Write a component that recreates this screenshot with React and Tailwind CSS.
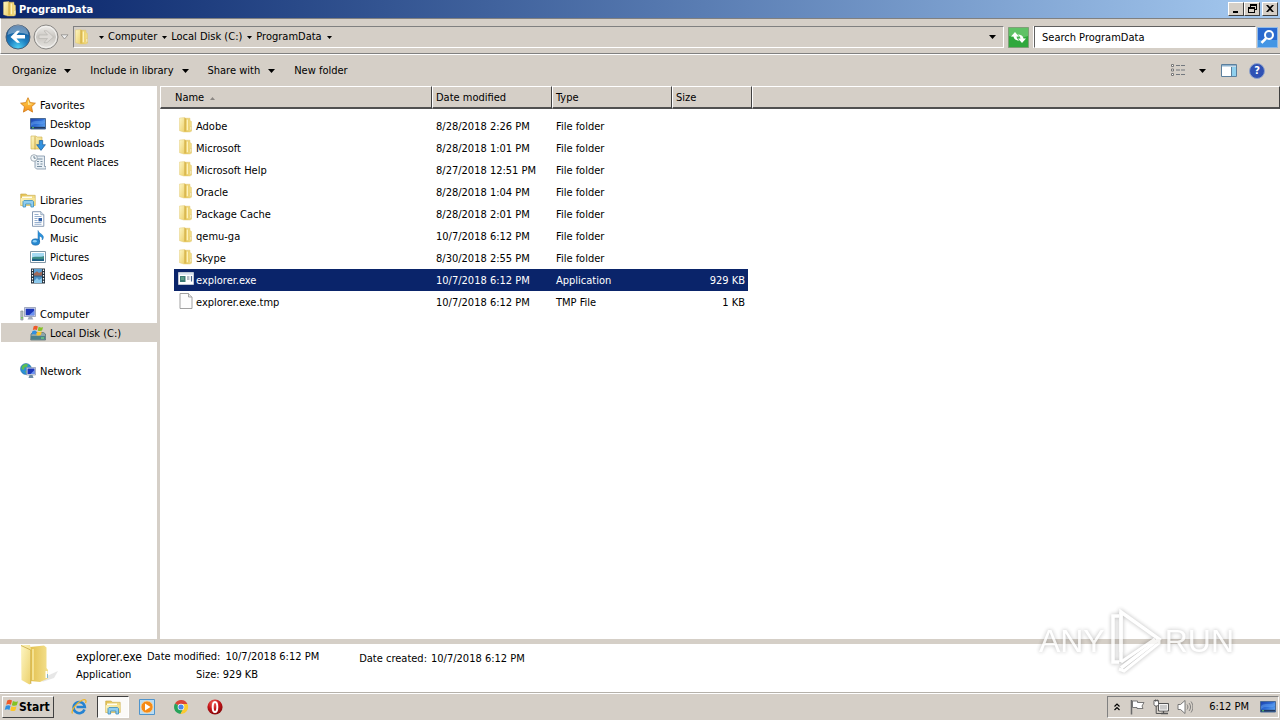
import React, { useState } from 'react';

const Svg = ({ size = 16, box = 16, className = '', children }) => (
  <svg width={size} height={size} viewBox={`0 0 ${box} ${box}`} className={`shrink-0 ${className}`} aria-hidden="true">
    {children}
  </svg>
);

const Gradients = () => (
  <svg width="0" height="0" className="absolute" aria-hidden="true">
    <defs>
      <linearGradient id="folderFront" x1="0" y1="0" x2="1" y2="1">
        <stop offset="0" stopColor="#fdf6c4" />
        <stop offset="1" stopColor="#ecd06a" />
      </linearGradient>
      <linearGradient id="folderBack" x1="0" y1="0" x2="1" y2="0">
        <stop offset="0" stopColor="#e3c04f" />
        <stop offset="1" stopColor="#f3e08d" />
      </linearGradient>
      <linearGradient id="screen" x1="0" y1="0" x2="1" y2="1">
        <stop offset="0" stopColor="#1c3fa8" />
        <stop offset="0.5" stopColor="#2f6fd8" />
        <stop offset="1" stopColor="#6db4f5" />
      </linearGradient>
      <radialGradient id="backBtn" cx="0.5" cy="0.95" r="0.9">
        <stop offset="0" stopColor="#4fd0f5" />
        <stop offset="0.45" stopColor="#1d7fc0" />
        <stop offset="1" stopColor="#14508f" />
      </radialGradient>
      <linearGradient id="fwdBtn" x1="0" y1="0" x2="0" y2="1">
        <stop offset="0" stopColor="#f1efec" />
        <stop offset="0.5" stopColor="#c9c6c1" />
        <stop offset="1" stopColor="#e9e7e3" />
      </linearGradient>
      <linearGradient id="star" x1="0" y1="0" x2="0" y2="1">
        <stop offset="0" stopColor="#ffd84e" />
        <stop offset="1" stopColor="#f58f1c" />
      </linearGradient>
      <radialGradient id="operaRed" cx="0.4" cy="0.25" r="0.8">
        <stop offset="0" stopColor="#f2685c" />
        <stop offset="0.5" stopColor="#c41418" />
        <stop offset="1" stopColor="#7d0508" />
      </radialGradient>
    </defs>
  </svg>
);

const FolderIcon = ({ size = 16 }) => (
  <Svg size={size}>
    <path d="M6 1.2h6v2.3l1.5 1v9.7L12 15H6z" fill="url(#folderBack)" stroke="#dcc064" strokeWidth=".4" />
    <path d="M1.500 1 6.800.5v13.700l-1 .8-4.300-1.300z" fill="url(#folderFront)" stroke="#e0c66a" strokeWidth=".4" />
    <path d="M7 1v13" stroke="#c39a31" strokeWidth=".6" />
    <path d="M9.300 2.500v10.800" stroke="#fff6c4" strokeWidth="1.200" />
    <path d="M12.200 9.500h1.300v3.600h-1.300z" fill="#fffbe2" stroke="#cfae4b" strokeWidth=".3" />
  </Svg>
);

const BigFolderIcon = () => (
  <svg width="40" height="42" viewBox="0 0 40 42" className="shrink-0" aria-hidden="true">
    <path d="M27 32 38 27l-4 7-12 4z" fill="#cfcfcf" opacity=".5" />
    <path d="M10 3 24 1.500l2.500 2V24l1.500 2v8.500L20 38l-10-1z" fill="url(#folderBack)" />
    <path d="M1 1h9l1 4v34l-1.500 1.500L1.500 36z" fill="url(#folderFront)" />
    <path d="M1 1.500 10.800 6v34" fill="none" stroke="#c9a73f" strokeWidth=".8" />
    <path d="M13 5v31" stroke="#f8e9a0" strokeWidth="1.600" />
    <path d="M25.500 27h2v7h-2z" fill="#fff" />
    <path d="M27.500 30v4" stroke="#64a8cd" strokeWidth=".8" />
  </svg>
);

const StarIcon = () => (
  <Svg>
    <path d="m8 .7 2.200 4.900 5.200.6-3.900 3.500 1.100 5.400L8 12.400l-4.600 2.700 1.100-5.400L.6 6.200l5.200-.6z" fill="url(#star)" stroke="#d07a16" strokeWidth=".8" />
    <path d="m8 2.800 1.500 3.600 3.400.5L8 8z" fill="#fff4b8" opacity=".8" />
  </Svg>
);

const DesktopIcon = () => (
  <Svg>
    <path d="M.5 2.500h15V13H.5z" fill="url(#screen)" stroke="#4a6a94" />
    <path d="M1 10.800h14v1.800H1z" fill="#22385e" />
    <path d="M2 11.200h2v1H2z" fill="#5ad06a" />
    <path d="M1 7c4-4 9 0 14-4v4c-5 3-9-1-14 3z" fill="#7fc0ff" opacity=".35" />
  </Svg>
);

const DownloadsIcon = () => (
  <Svg>
    <path d="M1 1h5l1 1h5v12H1z" fill="url(#folderFront)" stroke="#cfae4b" strokeWidth=".6" />
    <path d="M5 1.500v13" stroke="#b8912f" strokeWidth=".7" />
    <path d="M9.300 5.500h3.400v4.200h2.700L11 15.400 6.600 9.700h2.700z" fill="#3292e0" stroke="#175a9c" strokeWidth=".7" />
  </Svg>
);

const RecentIcon = () => (
  <Svg>
    <path d="M5 2h9.500v10.500H16V15H6.500L5 13.500z" fill="#e7eef4" stroke="#7c91a4" strokeWidth=".8" />
    <path d="M7 5h5.500M7 7.500h2M10.500 7.500h2M7 10h2M10.500 10h2M7 12.500h5" stroke="#6a8296" strokeWidth=".9" />
    <circle cx="4" cy="4" r="3.300" fill="#f6fafc" stroke="#8d9ba6" strokeWidth=".8" />
    <path d="M4 2v2.200h1.800" fill="none" stroke="#4d6678" strokeWidth=".8" />
  </Svg>
);

const LibrariesIcon = () => (
  <Svg>
    <path d="M.7 2h5.500l1.200 1.300h7.800v10.200H.7z" fill="url(#folderBack)" stroke="#c6a648" strokeWidth=".6" />
    <path d="M2 4.500h10V6H2z" fill="#fffdf0" />
    <path d="M.7 6.200h14.600v7.100H.7z" fill="url(#folderFront)" />
    <path d="M3 15V9.500l1-1h8.500l1 1V15h-2.600v-3H5.600v3z" fill="#8fcdf0" stroke="#3a8dbd" strokeWidth=".8" />
  </Svg>
);

const DocumentsIcon = () => (
  <Svg>
    <path d="M2.500.7h8.300l3 3v11.600H2.500z" fill="#fff" stroke="#7b90ab" strokeWidth=".9" />
    <path d="M10.800.7v3h3" fill="#dce6f2" stroke="#7b90ab" strokeWidth=".7" />
    <path d="M4.500 3.500h4M4.500 5.500h7M4.500 7.500h3M4.500 9.500h3M4.500 11.500h7M4.500 13.300h7" stroke="#7b9bc2" strokeWidth=".8" />
    <path d="M8.500 7H12v3.300H8.500z" fill="#2e5ea8" />
  </Svg>
);

const MusicIcon = () => (
  <Svg>
    <path d="M8 .5c.3 2.600 4.600 3.400 5.300 6.100.3 1.600-.5 2.900-1.200 3.400.4-2-.4-3.300-2.600-4.100v6.100H8z" fill="#2c93dc" stroke="#1c6eb2" strokeWidth=".5" />
    <ellipse cx="5.600" cy="12" rx="4.100" ry="3.200" fill="#2788d0" stroke="#175e9d" strokeWidth=".5" />
    <ellipse cx="4.800" cy="11.200" rx="2" ry="1.300" fill="#8fd0f7" />
  </Svg>
);

const PicturesIcon = () => (
  <Svg>
    <path d="M.5 2.500h15v11H.5z" fill="#fff" stroke="#8297a6" />
    <path d="M2 4h12v8H2z" fill="#a6daf3" />
    <path d="M2 8.500c3-2 6 .5 12-1.500v5H2z" fill="#3d8c86" />
    <path d="M2 10.200c4-1 8 1 12-.5V12H2z" fill="#1c5f86" />
  </Svg>
);

const VideosIcon = () => (
  <Svg>
    <path d="M1 .5h14v15H1z" fill="#22303c" />
    <path d="M4 1h8v6.500H4z" fill="#5b9fd2" />
    <path d="M4 8.300h8V15H4z" fill="#4a8fc2" />
    <path d="m4 5.500 3-2.300L9 5l3-1.500v4H4z" fill="#a06a5a" />
    <path d="m4 13 3-3 2 2 3-2v5H4z" fill="#8cc9ec" />
    <path d="M2.500 1.500v13M13.500 1.500v13" stroke="#fff" strokeWidth="1.200" strokeDasharray="1.500 1.300" />
  </Svg>
);

const ComputerIcon = () => (
  <Svg>
    <path d="M.8 5H3v9H.8z" fill="#b9c2c4" stroke="#76848a" strokeWidth=".6" />
    <path d="M1.300 11h1.400v1.500H1.300z" fill="#5fc640" />
    <path d="M4.500 1.500h11v9h-11z" fill="#dde2ee" stroke="#7f8aa6" strokeWidth=".7" />
    <path d="M5.700 2.700h8.600v6.600H5.700z" fill="#1b36ba" />
    <path d="m9 9.300 5.300-4.800v4.800z" fill="#6b92f0" />
    <path d="M9 10.500h2.800l1.500 3H7.500z" fill="#9fa9ba" />
  </Svg>
);

const WinFlag = () => (
  <>
    <path d="M3.700 1.300C5.200.5 6.600.6 7.900 1.400L6.900 5C5.500 4.300 4.200 4.300 2.800 5z" fill="#ef5a29" />
    <path d="M8.700 1.800c1.500.8 2.900.8 4.400.1l-1 3.600c-1.400.6-2.900.6-4.400-.1z" fill="#84c225" />
    <path d="M2.500 6C4 5.300 5.300 5.300 6.600 6l-1 3.600c-1.300-.7-2.700-.7-4.100 0z" fill="#2f8fe0" />
    <path d="M7.400 6.400c1.500.7 2.900.7 4.400.1l-1 3.600c-1.500.6-2.900.6-4.400-.1z" fill="#fcc52a" />
  </>
);

const DiskIcon = () => (
  <Svg>
    <path d="m1 9 1.500-1.500h11L15.500 9v6H.7z" fill="#8fa5a8" stroke="#536a70" strokeWidth=".7" />
    <path d="M1 11h14.200v3.600H1z" fill="#4c8089" />
    <path d="M11 13h3" stroke="#7cf07a" strokeWidth="1" />
    <WinFlag />
  </Svg>
);

const NetworkIcon = () => (
  <Svg>
    <circle cx="6" cy="6" r="5.500" fill="#2b8fd6" stroke="#1d6290" strokeWidth=".5" />
    <path d="M2 3c2-2.500 5-2.500 6-1.500L7 4l-2.500.5L4 7 1.500 6zM5 8l2 .5-.5 2.500z" fill="#5cbf52" />
    <path d="M6.500 4.500h9V12h-9z" fill="#dfe5ef" stroke="#7782a0" strokeWidth=".6" />
    <path d="M7.500 5.500h7V11h-7z" fill="#1b36ba" />
    <path d="m10.500 11 4-4v4z" fill="#6b92f0" />
    <path d="M9.500 12h3l1 3h-5z" fill="#6c8ba4" />
  </Svg>
);

const AppIcon = () => (
  <Svg>
    <path d="M.5 1.500h15v12H.5z" fill="#fff" stroke="#cdd3da" strokeWidth=".8" />
    <path d="M1 2h14v1.800H1z" fill="#d7e3ef" />
    <path d="M2 5h5.500v6H2z" fill="#3c7a74" />
    <path d="M3 6h3v3H3z" fill="#5d9c86" />
    <path d="M9 6h2.500M9 8h2.500" stroke="#6f7f92" />
    <path d="M13.500 5v5.500" stroke="#4b6690" strokeWidth="1.200" />
  </Svg>
);

const FileIcon = () => (
  <Svg>
    <path d="M2 .5h8.500L14 4v11.500H2z" fill="#fdfdfd" stroke="#979797" strokeWidth=".9" />
    <path d="M10.500.5V4H14" fill="#e8e8e8" stroke="#979797" strokeWidth=".8" />
  </Svg>
);

const Caret = () => (
  <svg width="7" height="4" viewBox="0 0 7 4" className="shrink-0" aria-hidden="true">
    <path d="M0 0h7L3.500 4z" fill="#000" />
  </svg>
);

const SmallCaret = () => (
  <svg width="5" height="3" viewBox="0 0 5 3" className="shrink-0" aria-hidden="true">
    <path d="M0 0h5L2.500 3z" fill="#000" />
  </svg>
);

const TITLE_BUTTONS = [
  { label: 'Minimize', path: 'M3 8h5v2H3z' },
  { label: 'Restore', path: 'M4 1h7v6H9V6h1V3H5v1H4zM2 4h7v6H2zM3 6v3h5V6z' },
  { label: 'Close', path: 'M2 2h2l2 2 2-2h2L7 5.500 10 9H8L6 7 4 9H2l3-3.500z' },
];

const TitleBar = () => (
  <header className="flex h-[18px] shrink-0 items-center bg-linear-to-r from-[#0a246a] to-[#a6caf0] px-[2px] text-white">
    <FolderIcon />
    <h1 className="flex-1 pl-px pt-px font-bold">ProgramData</h1>
    {TITLE_BUTTONS.map((b) => (
      <button
        key={b.label}
        aria-label={b.label}
        className={`flex h-[14px] w-4 items-center justify-center border border-t-white border-l-white border-r-[#404040] border-b-[#404040] bg-[#d5cfc7] ${b.label === 'Close' ? 'ml-[2px]' : ''}`}
      >
        <Svg size={12} box={12}>
          <path d={b.path} fill="#000" fillRule="evenodd" />
        </Svg>
      </button>
    ))}
  </header>
);

const NavBar = () => (
  <nav className="flex h-9 shrink-0 items-center border-t border-b border-l border-t-[#808080] border-b-[#808080] border-l-white pl-1 pr-[2px] pt-[2px]">
    <button aria-label="Back">
      <Svg size={26} box={26}>
        <circle cx="13" cy="13" r="12" fill="url(#backBtn)" stroke="#4a6078" strokeWidth="1" />
        <path d="M2.500 11a10.500 10 0 0 1 21 0c-6-3-15-3-21 0z" fill="#fff" opacity=".35" />
        <path d="M5.500 13 12 6.800h3L11.500 11h8.500v3.500h-8.500l3.500 4.200h-3z" fill="#fff" />
      </Svg>
    </button>
    <button aria-label="Forward" className="ml-[2px]">
      <Svg size={26} box={26}>
        <circle cx="13" cy="13" r="12" fill="url(#fwdBtn)" stroke="#8b8986" strokeWidth="1" />
        <circle cx="13" cy="13" r="10.500" fill="none" stroke="#f4f3f1" strokeWidth="1" />
        <path d="M20.500 13 14 6.800h-3l3.500 4.200H6v3.500h8.500L11 18.700h3z" fill="#dddad6" stroke="#b4b1ad" strokeWidth=".6" />
      </Svg>
    </button>
    <button aria-label="Recent pages" className="ml-px">
      <svg width="9" height="6" viewBox="0 0 9 6" aria-hidden="true">
        <path d="M1 .8h7L4.500 5z" fill="#eee" stroke="#8d8a86" strokeWidth=".8" />
      </svg>
    </button>
    <div className="ml-1 flex h-[22px] flex-1 items-center border border-t-[#808080] border-l-[#808080] border-r-white border-b-white pr-[5px]">
      <FolderIcon />
      <ol className="flex flex-1 items-center gap-1 pl-[9px]">
        <li><SmallCaret /></li>
        {['Computer', 'Local Disk (C:)', 'ProgramData'].map((crumb) => (
          <li key={crumb} className="flex items-center gap-[5px]">
            <a href="#">{crumb}</a>
            <SmallCaret />
          </li>
        ))}
      </ol>
      <button aria-label="Previous locations" className="p-[2px]"><Caret /></button>
    </div>
    <button aria-label="Refresh" className="ml-1">
      <Svg size={21} box={21}>
        <path d="M.5.5h20v20H.5z" fill="#2fa83c" stroke="#7f9f78" />
        <path d="M1 1h19v8c-6 2-13 2-19 0z" fill="#74cd78" opacity=".7" />
        <path d="M3 9.500 7 5l4 4.500H8.500c.3 2 1.500 3.300 3 4-3.500 0-5.700-1.300-6-4zM18 11.500 14 16l-4-4.500h2.500c-.3-2-1.500-3.300-3-4 3.500 0 5.700 1.300 6 4z" fill="#fff" />
      </Svg>
    </button>
    <div className="ml-1 h-[22px] border-l border-white" />
    <input
      type="text"
      aria-label="Search ProgramData"
      placeholder="Search ProgramData"
      className="h-[22px] w-[222px] border border-t-[#606060] border-l-[#606060] border-r-white border-b-white bg-white px-[7px] placeholder:text-black placeholder:opacity-100"
    />
    <button aria-label="Search" className="ml-px">
      <Svg size={21} box={21}>
        <path d="M.5.5h20v20H.5z" fill="#2868cf" stroke="#8fbbea" />
        <path d="M1 13h19v7H1z" fill="#56b5f2" opacity=".6" />
        <circle cx="12" cy="8" r="4" fill="#3b74cd" stroke="#fff" strokeWidth="2" />
        <path d="m9 11.300-4.500 4.500" stroke="#fff" strokeWidth="2.600" />
      </Svg>
    </button>
  </nav>
);

const Toolbar = () => (
  <div className="flex h-8 shrink-0 items-center border-t border-white pl-3 pr-[15px]">
    <div className="flex flex-1 items-center gap-[19px]">
      {['Organize', 'Include in library', 'Share with'].map((label) => (
        <button key={label} className="flex items-center gap-2">
          {label}
          <Caret />
        </button>
      ))}
      <button>New folder</button>
    </div>
    <button aria-label="Change view">
      <Svg>
        <path d="M1.500 1.500h2v2h-2zM1.500 6h2v2h-2zM1.500 10.500h2v2h-2z" fill="#fff" stroke="#777" />
        <path d="M6 2.500h4M11 2.500h4M6 7h4M11 7h4M6 11.500h4M11 11.500h4" stroke="#72787e" />
      </Svg>
    </button>
    <button aria-label="More view options" className="ml-[13px]"><Caret /></button>
    <button aria-label="Show the preview pane" className="ml-[15px]">
      <Svg>
        <path d="M.5 1.500h15v12H.5z" fill="#fff" stroke="#5b7f9d" />
        <path d="M1 2h14v1.500H1z" fill="#8fb3cf" />
        <path d="M10.500 4v9.500" stroke="#5b7f9d" />
        <path d="M11 4h4v9h-4z" fill="#8fd0ee" />
      </Svg>
    </button>
    <button aria-label="Help" className="ml-3 flex h-4 w-4 items-center justify-center rounded-full border border-[#8fa3cc] bg-[#2f51b4] font-bold text-white">
      ?
    </button>
  </div>
);

const GROUPS = [
  {
    name: 'Favorites',
    Icon: StarIcon,
    items: [
      { name: 'Desktop', Icon: DesktopIcon },
      { name: 'Downloads', Icon: DownloadsIcon },
      { name: 'Recent Places', Icon: RecentIcon },
    ],
  },
  {
    name: 'Libraries',
    Icon: LibrariesIcon,
    items: [
      { name: 'Documents', Icon: DocumentsIcon },
      { name: 'Music', Icon: MusicIcon },
      { name: 'Pictures', Icon: PicturesIcon },
      { name: 'Videos', Icon: VideosIcon },
    ],
  },
  { name: 'Computer', Icon: ComputerIcon, items: [{ name: 'Local Disk (C:)', Icon: DiskIcon, active: true }] },
  { name: 'Network', Icon: NetworkIcon, items: [] },
];

const Sidebar = () => (
  <aside className="flex w-[160px] shrink-0 flex-col gap-[19px] border-r-[3px] border-[#d5cfc7] bg-white pl-px pt-[9px]">
    {GROUPS.map(({ name, Icon, items }) => (
      <div key={name}>
        <a href="#" className="flex h-[19px] items-center gap-1 pl-[19px]">
          <Icon />
          <span className="pt-[2px]">{name}</span>
        </a>
        {items.map((item) => (
          <a
            key={item.name}
            href="#"
            className={`flex h-[19px] items-center gap-1 pl-[29px] ${item.active ? 'bg-[#d5cfc7]' : ''}`}
          >
            <item.Icon />
            <span className="pt-[2px]">{item.name}</span>
          </a>
        ))}
      </div>
    ))}
  </aside>
);

const FILES = [
  { name: 'Adobe', date: '8/28/2018 2:26 PM', type: 'File folder' },
  { name: 'Microsoft', date: '8/28/2018 1:01 PM', type: 'File folder' },
  { name: 'Microsoft Help', date: '8/27/2018 12:51 PM', type: 'File folder' },
  { name: 'Oracle', date: '8/28/2018 1:04 PM', type: 'File folder' },
  { name: 'Package Cache', date: '8/28/2018 2:01 PM', type: 'File folder' },
  { name: 'qemu-ga', date: '10/7/2018 6:12 PM', type: 'File folder' },
  { name: 'Skype', date: '8/30/2018 2:55 PM', type: 'File folder' },
  { name: 'explorer.exe', date: '10/7/2018 6:12 PM', type: 'Application', size: '929 KB' },
  { name: 'explorer.exe.tmp', date: '10/7/2018 6:12 PM', type: 'TMP File', size: '1 KB' },
];

const fileIcon = (type) => {
  if (type === 'File folder') return <FolderIcon />;
  return type === 'Application' ? <AppIcon /> : <FileIcon />;
};

const TH = 'h-[23px] border-t border-l border-t-white border-l-white border-r border-r-[#404040] border-b-2 border-b-[#505050] p-0 pt-[2px] text-left font-normal';
const CELL = 'h-[22px] leading-[24px]';

const FileTable = () => {
  const [selected, setSelected] = useState('explorer.exe');

  return (
    <main className="min-w-0 flex-1 bg-white">
      <table className="w-full table-fixed border-separate border-spacing-0">
        <colgroup>
          <col className="w-[272px]" />
          <col className="w-[120px]" />
          <col className="w-[120px]" />
          <col className="w-[80px]" />
          <col />
        </colgroup>
        <thead className="bg-[#d5cfc7]">
          <tr>
            <th className={`${TH} pl-[14px]`}>
              <span className="flex items-center gap-[6px]">
                Name
                <svg width="5" height="3" viewBox="0 0 5 3" aria-hidden="true">
                  <path d="M0 3h5L2.500 0z" fill="#8b8783" />
                </svg>
              </span>
            </th>
            <th className={`${TH} pl-[3px]`}>Date modified</th>
            <th className={`${TH} pl-[3px]`}>Type</th>
            <th className={`${TH} pl-[3px]`}>Size</th>
            <th className={TH} aria-label="Empty" />
          </tr>
        </thead>
        <tbody>
          <tr><td colSpan={5} className="h-[6px] p-0" /></tr>
          {FILES.map((f) => {
            const on = f.name === selected;
            const bg = on ? 'bg-[#0a246a]' : '';
            return (
              <tr key={f.name} onClick={() => setSelected(f.name)} className={on ? 'text-white' : 'text-black'}>
                <td className="p-0 pl-[14px]">
                  <div className={`flex h-[22px] gap-[2px] pl-1 pt-[2px] ${bg}`}>
                    {fileIcon(f.type)}
                    <span className="leading-5">{f.name}</span>
                  </div>
                </td>
                <td className="p-0"><div className={`${CELL} pl-1 ${bg}`}>{f.date}</div></td>
                <td className="p-0"><div className={`${CELL} pl-1 ${bg}`}>{f.type}</div></td>
                <td className="p-0 pr-1"><div className={`${CELL} pr-[3px] text-right ${bg}`}>{f.size}</div></td>
                <td className="p-0" />
              </tr>
            );
          })}
        </tbody>
      </table>
    </main>
  );
};

const DetailsPane = () => (
  <section className="flex h-12 shrink-0 bg-white pl-5">
    <BigFolderIcon />
    <div className="pl-4 pt-1">
      <div className="flex h-[18px] items-center gap-[5px]">
        <span className="text-[12px]">explorer.exe</span>
        <span>Date modified:</span>
        <span>10/7/2018 6:12 PM</span>
      </div>
      <div className="flex h-[18px] items-center">
        <span className="w-[120px]">Application</span>
        <span>Size: 929 KB</span>
      </div>
    </div>
    <div className="flex h-[26px] items-center gap-1 pl-10 pt-1">
      <span>Date created:</span>
      <span>10/7/2018 6:12 PM</span>
    </div>
  </section>
);

const IeIcon = () => (
  <Svg>
    <path d="M13.500 10.500A5.600 5.600 0 1 1 13.800 8H5.500" fill="none" stroke="#2583d2" strokeWidth="2.600" />
    <path d="M1.500 14.500c-2-3 4-11 10-13.500 3-1 4.300.3 3 3" fill="none" stroke="#eeb526" strokeWidth="1.300" />
  </Svg>
);

const MediaIcon = () => (
  <Svg>
    <path d="M.5.5h15v15H.5z" fill="#b9dcf3" stroke="#4f94cc" />
    <circle cx="8" cy="8" r="6" fill="#f58a16" stroke="#fbd39a" strokeWidth=".8" />
    <path d="M6 4.500 11.500 8 6 11.500z" fill="#fff" />
  </Svg>
);

const ChromeIcon = () => (
  <Svg>
    <path d="M8 8 2 4.500A7 7 0 0 1 14.400 5H8z" fill="#db4437" />
    <path d="M8 8 2 4.500A7 7 0 0 0 7.500 15l3-5.500z" fill="#28a35a" />
    <path d="m8 8 2.500 1.500-3 5.500A7 7 0 0 0 14.400 5H8z" fill="#fbca30" />
    <circle cx="8" cy="8" r="3.300" fill="#fff" />
    <circle cx="8" cy="8" r="2.600" fill="#4a86e8" />
  </Svg>
);

const OperaIcon = () => (
  <Svg>
    <circle cx="8" cy="8" r="7.600" fill="url(#operaRed)" />
    <ellipse cx="8" cy="8" rx="2.300" ry="5" fill="none" stroke="#fff" strokeWidth="2" />
  </Svg>
);

const LAUNCHERS = [
  { name: 'Internet Explorer', Icon: IeIcon },
  { name: 'Windows Explorer', Icon: LibrariesIcon, active: true },
  { name: 'Windows Media Player', Icon: MediaIcon },
  { name: 'Google Chrome', Icon: ChromeIcon },
  { name: 'Opera', Icon: OperaIcon },
];

const Taskbar = () => (
  <footer className="flex h-7 shrink-0 items-center border-t border-[#b5b1aa] pl-[2px] pr-px pt-px shadow-[inset_0_1px_0_#fff]">
    <button className="flex h-[22px] w-[52px] items-center border border-t-white border-l-white border-r-[#404040] border-b-[#404040] text-[12px] font-bold">
      <Svg size={16} box={14}><WinFlag /></Svg>
      Start
    </button>
    <div className="flex flex-1 items-center gap-[2px] pl-[9px]">
      {LAUNCHERS.map(({ name, Icon, active }) => (
        <button
          key={name}
          aria-label={name}
          className={`flex h-[22px] w-8 items-center justify-center ${active ? 'border border-t-[#404040] border-l-[#404040] border-r-white border-b-white bg-[#fbfaf8]' : ''}`}
        >
          <Icon />
        </button>
      ))}
    </div>
    <div className="flex h-[22px] items-center border border-t-[#808080] border-l-[#808080] border-r-white border-b-white pl-[5px] pr-[2px]">
      <button aria-label="Show hidden icons">
        <Svg size={8} box={8}>
          <path d="M1.500 3.500 4 1l2.500 2.500M1.500 7 4 4.500 6.500 7" fill="none" stroke="#000" strokeWidth="1.200" />
        </Svg>
      </button>
      <div className="flex items-center gap-2 pl-2">
        <Svg>
          <path d="M2.500 1v14.500" stroke="#6b6b6b" strokeWidth="1.500" />
          <path d="M3.500 2h5v1.500H15L13 7l1 2.500H8v-1H3.500z" fill="#fff" stroke="#6b6b6b" strokeWidth=".9" />
        </Svg>
        <Svg>
          <path d="M5.500 4.500h10V12h-10z" fill="#c9c9c9" stroke="#555" />
          <path d="M6.500 5.500h8V11h-8z" fill="none" stroke="#fff" strokeWidth=".8" />
          <path d="M8 14.500h7M10.500 12v2" stroke="#555" strokeWidth="1.300" />
          <path d="M1 1.500h4.500v4l-1 1.500H2L1 5.500z" fill="#fff" stroke="#555" strokeWidth=".9" />
          <path d="M3.200 7v7.500H8M2.500.5v2M4.200.5v2" fill="none" stroke="#555" />
        </Svg>
        <Svg>
          <path d="M1 5.500h2.500l4.500-4v13l-4.500-4H1z" fill="#fff" stroke="#6b6b6b" strokeWidth=".9" />
          <path d="M10 5.500c1.200 1.500 1.200 3.500 0 5M12 4c2 2.500 2 5.500 0 8M14 2.500c2.500 3.500 2.500 7.500 0 11" fill="none" stroke="#777" strokeWidth=".9" />
        </Svg>
      </div>
      <time className="pl-4 pr-[11px]">6:12 PM</time>
      <button aria-label="Show desktop"><DesktopIcon /></button>
    </div>
  </footer>
);

const Watermark = () => (
  <div className="pointer-events-none absolute right-[46px] bottom-[46px] flex items-center font-['Liberation_Sans',sans-serif] text-[32px] leading-none text-white opacity-80 [filter:drop-shadow(0_0_2px_rgba(0,0,0,0.35))]">
    <span>ANY</span>
    <svg width="60" height="66" viewBox="0 0 60 66" aria-hidden="true">
      <path d="M14 8H8v46h6M16 54V4l38 27-38 29" fill="none" stroke="#fff" strokeWidth="3.500" />
      <path d="M16 4v40M16 54l34-23M14 61l5 2 35-28v-4" fill="none" stroke="#fff" strokeWidth="3" />
    </svg>
    <span>RUN</span>
  </div>
);

export default function App() {
  return (
    <div className="relative flex h-screen flex-col overflow-hidden bg-[#d5cfc7] font-['DejaVu_Sans_Condensed','DejaVu_Sans',sans-serif] text-[11px] leading-[14px] text-black">
      <Gradients />
      <TitleBar />
      <NavBar />
      <Toolbar />
      <div className="flex min-h-0 flex-1">
        <Sidebar />
        <FileTable />
      </div>
      <div className="h-[5px] shrink-0" />
      <DetailsPane />
      <Taskbar />
      <Watermark />
    </div>
  );
}
